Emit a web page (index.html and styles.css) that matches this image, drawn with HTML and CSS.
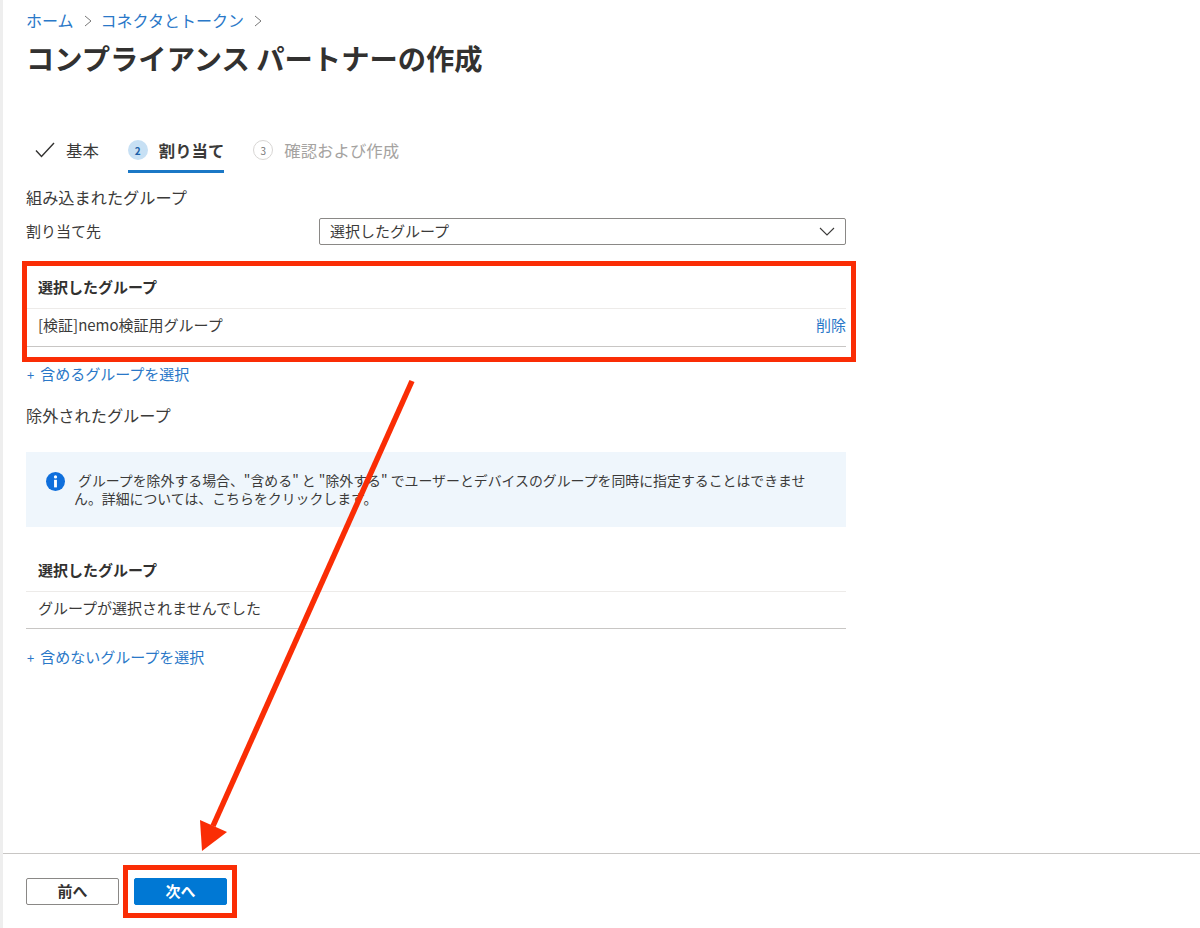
FILE: index.html
```html
<!DOCTYPE html>
<html lang="ja">
<head>
<meta charset="utf-8">
<title>コンプライアンス パートナーの作成</title>
<link rel="stylesheet" href="styles.css">
</head>
<body>
<div class="page">
  <main class="content">
    <nav class="crumbs">
      <a class="link">ホーム</a>
      <svg class="chev" viewBox="0 0 8 12"><path d="M1 1l6 5-6 5"/></svg>
      <a class="link">コネクタとトークン</a>
      <svg class="chev" viewBox="0 0 8 12"><path d="M1 1l6 5-6 5"/></svg>
    </nav>
    <h1 class="title">コンプライアンス パートナーの作成</h1>
    <div class="steps">
      <div class="step">
        <svg class="check" viewBox="0 0 20 16"><path d="M1 8.5l5.5 6L19 1"/></svg>
        <span>基本</span>
      </div>
      <div class="step active">
        <span class="badge current">2</span>
        <span>割り当て</span>
      </div>
      <div class="step todo">
        <span class="badge pending">3</span>
        <span>確認および作成</span>
      </div>
    </div>
    <div class="section-label first">組み込まれたグループ</div>
    <div class="assign">
      <label class="assign-label">割り当て先</label>
      <div class="select">
        <span>選択したグループ</span>
        <svg class="select-chev" viewBox="0 0 16 9"><path d="M1 1l7 7 7-7"/></svg>
      </div>
    </div>
    <div class="table included">
      <div class="thead">選択したグループ</div>
      <div class="trow"><span>[検証]nemo検証用グループ</span><a class="link">削除</a></div>
    </div>
    <a class="link add"><span class="plus">+</span>含めるグループを選択</a>
    <div class="section-label excluded">除外されたグループ</div>
    <div class="info">
      <svg class="info-icon" viewBox="0 0 20 20"><circle cx="10" cy="10" r="10" fill="#0f6fdc"/><circle cx="10" cy="5.2" r="1.7" fill="#fff"/><rect x="8.5" y="8.2" width="3" height="8" fill="#fff"/></svg>
      <p class="info-text"><span class="indent"></span>グループを除外する場合、"含める" と "除外する" でユーザーとデバイスのグループを同時に指定することはできません。詳細については、こちらをクリックします。</p>
    </div>
    <div class="table second">
      <div class="thead">選択したグループ</div>
      <div class="trow"><span>グループが選択されませんでした</span></div>
    </div>
    <a class="link add add-last"><span class="plus">+</span>含めないグループを選択</a>
  </main>
  <footer class="footer">
    <button class="btn prev">前へ</button>
    <button class="btn next">次へ</button>
  </footer>
</div>
<div class="mark mark-table"></div>
<div class="mark mark-next"></div>
<svg class="arrow" viewBox="0 0 1200 928">
  <path class="arrow-line" d="M412 381L213 826"/>
  <path class="arrow-head" d="M200 820L227 832L202 851Z"/>
</svg>
</body>
</html>
```
FILE: styles.css
```css
* { box-sizing: border-box; }
html, body { margin: 0; padding: 0; }
body {
  width: 1200px;
  height: 928px;
  overflow: hidden;
  position: relative;
  background: #fff;
  color: #3b3a39;
  font-family: "Noto Sans CJK JP", "Noto Sans", sans-serif;
  font-size: 15px;
}
.page {
  height: 928px;
  display: flex;
  flex-direction: column;
  border-left: 3px solid #eeeeee;
}
.content { flex: 1; padding: 9px 0 0 23px; width: 843px; }
.link { color: #2a78c8; text-decoration: none; }
.crumbs { display: flex; align-items: center; height: 22px; font-size: 16px; }
.chev { width: 8px; height: 12px; margin: 1px 9px 0 10px; fill: none; stroke: #777; stroke-width: 1; }
.title { margin: 10px 0 0; font-size: 28.3px; line-height: 34px; font-weight: 700; color: #323130; }
.steps { display: flex; margin: 51px 0 0; height: 47px; }
.step { display: flex; align-items: center; height: 47px; font-size: 16.4px; padding-top: 4px; border-bottom: 3px solid transparent; }
.step:first-child { margin: 0 29px 0 9px; }
.check { width: 20px; height: 16px; margin-right: 11px; fill: none; stroke: #323130; stroke-width: 1.4; }
.active { font-weight: 700; border-bottom-color: #1b78c6; margin-right: 29px; }
.todo { color: #a5a3a1; }
.badge { width: 20px; height: 20px; border-radius: 50%; display: flex; align-items: center; justify-content: center; font-size: 10px; margin-right: 11px; }
.current { background: #c7e0f4; color: #1b5fa8; font-weight: 700; }
.pending { border: 1px solid #d8d6d4; color: #777; background: #fff; font-weight: 400; }
.section-label { font-size: 16.2px; line-height: 22px; }
.first { margin-top: 13px; }
.assign { display: flex; align-items: center; justify-content: space-between; margin-top: 10px; height: 27px; }
.assign-label { font-size: 15px; padding-bottom: 2px; }
.select { width: 527px; height: 27px; border: 1px solid #8a8886; border-radius: 2px; padding: 0 10px 2px; display: flex; align-items: center; justify-content: space-between; font-size: 15px; }
.select-chev { width: 16px; height: 9px; fill: none; stroke: #3b3a39; stroke-width: 1.1; margin-top: 2px; }
.table { width: 820px; }
.thead { height: 39px; display: flex; align-items: center; padding: 0 0 6px 12px; font-weight: 700; font-size: 15px; color: #323130; border-bottom: 1px solid #edebe9; }
.trow { height: 38px; display: flex; align-items: center; justify-content: space-between; padding: 0 0 6px 12px; font-size: 15px; border-bottom: 1px solid #c8c6c4; }
.included { margin-top: 25px; }
.add { display: block; margin-top: 17px; font-size: 15px; line-height: 20px; }
.add-last { margin-top: 18px; }
.plus { font-size: 13px; margin: 0 6px 0 1px; }
.excluded { margin-top: 19px; }
.info { width: 820px; height: 75px; margin-top: 26px; padding: 19px 30px 0 20px; background: #eff6fc; display: flex; align-items: flex-start; }
.info-icon { width: 19px; height: 19px; flex: none; margin-top: 1px; }
.info-text { margin: 0 0 0 9px; font-size: 13.9px; line-height: 18px; color: #3b3a39; }
.indent { display: inline-block; width: 4px; }
.second { margin-top: 26px; }
.second .trow { height: 37px; }
.footer { height: 75px; flex: none; border-top: 1px solid #c8c6c4; padding: 24px 0 0 23px; display: flex; align-items: flex-start; gap: 15px; }
.btn { width: 93px; height: 27px; border-radius: 2px; font: 700 15px "Noto Sans CJK JP", sans-serif; padding: 0 0 3px; }
.prev { background: #fff; border: 1px solid #8a8886; color: #323130; }
.next { background: #0078d4; border: 1px solid #0078d4; color: #fff; }
.mark { position: absolute; border: 5px solid #fa2d05; }
.mark-table { left: 22px; top: 261px; width: 834px; height: 101px; }
.mark-next { left: 123px; top: 865px; width: 114px; height: 53px; }
.arrow { position: absolute; left: 0; top: 0; width: 1200px; height: 928px; pointer-events: none; }
.arrow-line { stroke: #fa2d05; stroke-width: 5.5; fill: none; }
.arrow-head { fill: #fa2d05; }
```
